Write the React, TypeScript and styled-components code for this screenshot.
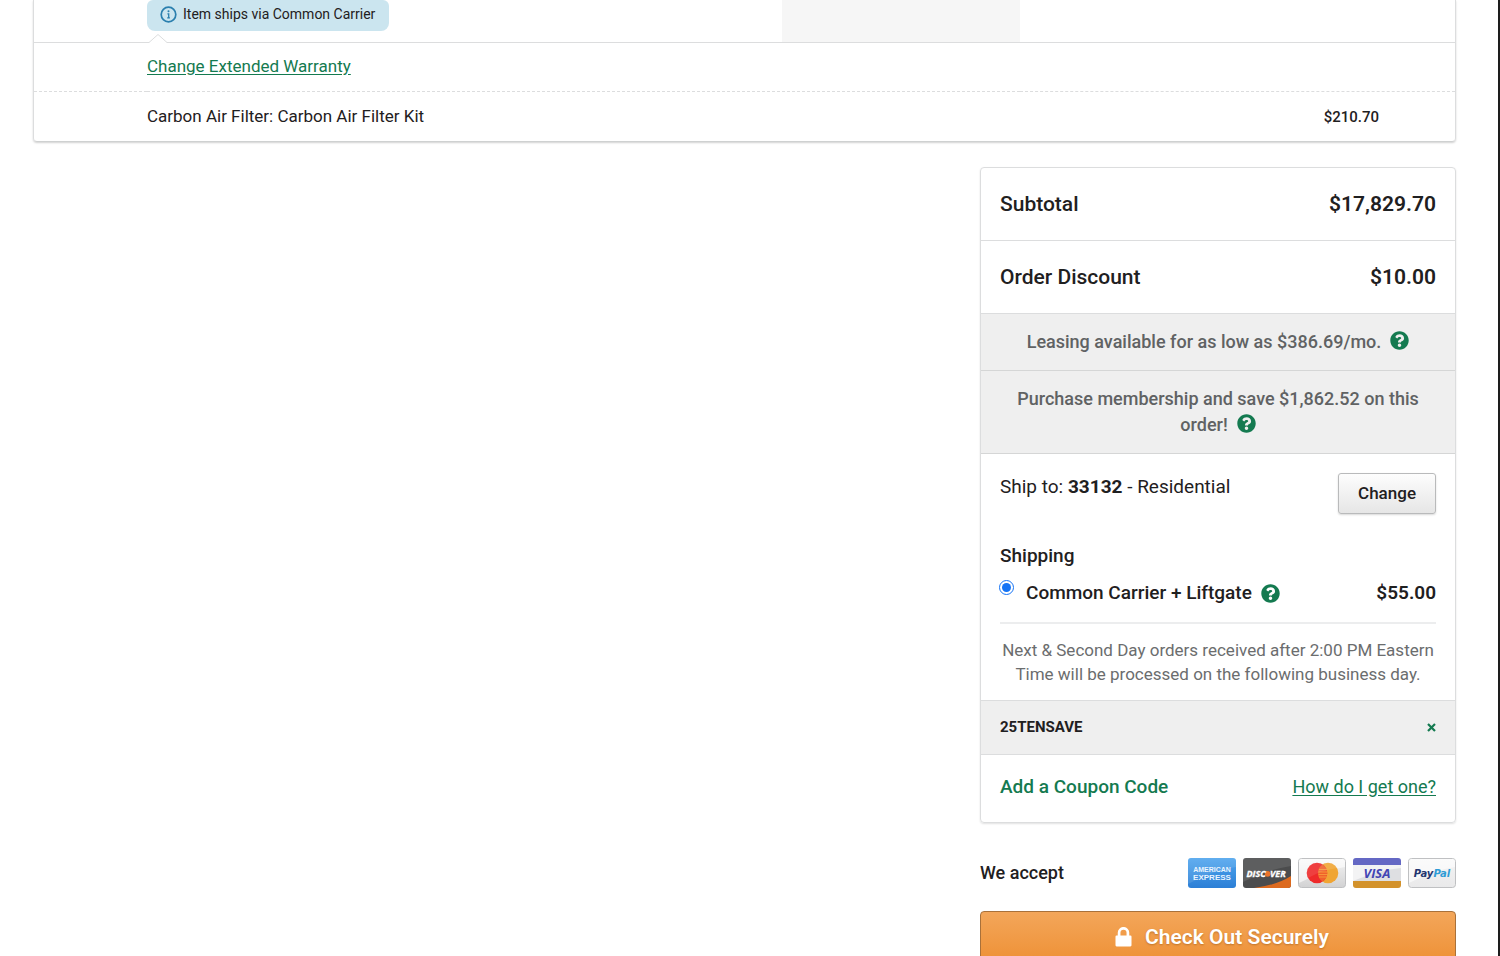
import React from "react";
import styled, { createGlobalStyle } from "styled-components";
import { FaQuestionCircle } from "react-icons/fa";

const GlobalStyle = createGlobalStyle`
  *, *::before, *::after { box-sizing: border-box; }
  body {
    margin: 0;
    background: #fff;
    color: #1f2021;
    font-family: Roboto, "Liberation Sans", sans-serif;
    font-size: 16px;
    line-height: 24px;
  }
  h2, p { margin: 0; }
  button, input { font: inherit; }
`;

const green = "#147a50";
const line = "#dcddde";

const Page = styled.main`
  height: 100vh;
  overflow: hidden;
  padding: 0 42px 0 33px;
  border-right: 2px solid #1d1d1d;
`;

const CartTable = styled.table`
  width: 100%;
  table-layout: fixed;
  border-spacing: 0;
  border: 1px solid ${line};
  border-top: 0;
  border-bottom-color: #cfd1d1;
  border-radius: 0 0 4px 4px;
  box-shadow: 0 1px 2px rgba(0, 0, 0, 0.18);
`;

const Col = styled.col<{ $width?: number }>`
  width: ${(p) => (p.$width ? `${p.$width}px` : "auto")};
`;

const Cell = styled.td<{ $shaded?: boolean }>`
  height: 42px;
  padding: 0;
  vertical-align: top;
  background: ${(p) => (p.$shaded ? "#f6f6f6" : "transparent")};
`;

const OptionCell = styled.td<{ $divider?: "solid" | "dashed"; $price?: boolean }>`
  position: relative;
  height: ${(p) => (p.$divider === "solid" ? 49 : 50)}px;
  padding: 0 ${(p) => (p.$price ? 76 : 0)}px ${(p) => (p.$price ? 0 : 2)}px 0;
  border-top: 1px ${(p) => p.$divider ?? "solid"} ${line};
  vertical-align: middle;
  text-align: ${(p) => (p.$price ? "right" : "left")};
  font-size: ${(p) => (p.$price ? 15 : 17)}px;
  font-weight: ${(p) => (p.$price ? 500 : 400)};
`;

const Notch = styled.svg`
  position: absolute;
  top: -9px;
  left: 2px;
  display: block;
`;

const ShipBadge = styled.div`
  display: inline-flex;
  align-items: center;
  gap: 6px;
  height: 31px;
  padding: 0 14px 3px 13px;
  border-radius: 6px 6px 8px 8px;
  background: #cbe5ef;
  font-size: 14px;
`;

const TextLink = styled.a<{ $size?: number }>`
  color: ${green};
  font-size: ${(p) => p.$size ?? 17}px;
  text-decoration: underline;
  text-underline-offset: 2px;
`;

const Aside = styled.aside`
  width: 476px;
  max-width: 100%;
  margin: 25px 0 0 auto;
`;

const Summary = styled.section`
  border: 1px solid ${line};
  border-radius: 4px;
  box-shadow: 0 1px 2px rgba(0, 0, 0, 0.12);
`;

const TotalRow = styled.div`
  display: flex;
  justify-content: space-between;
  align-items: center;
  height: 73px;
  padding: 0 19px;
  border-bottom: 1px solid ${line};
  font-size: 21px;
  font-weight: 500;
`;

const Amount = styled.span`
  font-weight: 600;
`;

const Promo = styled.p`
  padding: 15px 30px 15px;
  border-bottom: 1px solid #d5d6d6;
  background: #efefef;
  color: #606263;
  font-size: 18px;
  font-weight: 500;
  line-height: 26px;
  text-align: center;
`;

const HelpButton = styled.button`
  display: inline-flex;
  margin: 0 0 0 9px;
  padding: 0;
  border: 0;
  background: none;
  color: ${green};
  font-size: 19px;
  vertical-align: -2px;
  cursor: pointer;
`;

const ShipSection = styled.div`
  padding: 19px 19px 14px;
`;

const ShipTo = styled.div`
  display: flex;
  justify-content: space-between;
  align-items: flex-start;
  font-size: 19px;
  line-height: 28px;
`;

const ChangeButton = styled.button`
  height: 41px;
  padding: 0 19px 2px;
  border: 1px solid #b9babb;
  border-radius: 3px;
  background: linear-gradient(#fdfdfd, #e6e6e6);
  box-shadow: 0 1px 2px rgba(0, 0, 0, 0.15);
  color: #1f2021;
  font-size: 17px;
  font-weight: 500;
  cursor: pointer;
`;

const ShippingTitle = styled.h2`
  margin-top: 28px;
  font-size: 19px;
  font-weight: 500;
  line-height: 28px;
`;

const ShippingOption = styled.div`
  display: flex;
  align-items: center;
  padding: 9px 0 15px;
  border-bottom: 2px solid #ecedee;
  font-size: 19px;
  font-weight: 500;
  line-height: 28px;
`;

const Radio = styled.input`
  align-self: flex-start;
  width: 15px;
  height: 15px;
  margin: 1px 12px 0 -1px;
  accent-color: #1473f5;
`;

const OptionAmount = styled(Amount)`
  margin-left: auto;
`;

const ShipNote = styled.p`
  padding-top: 14px;
  color: #6b6d6e;
  font-size: 17px;
  text-align: center;
`;

const CouponRow = styled.div`
  display: flex;
  justify-content: space-between;
  align-items: center;
  height: 55px;
  padding: 0 19px 1px;
  border: solid ${line};
  border-width: 1px 0;
  background: #efefef;
  font-size: 15px;
  font-weight: 700;
`;

const PlainButton = styled.button`
  padding: 0;
  border: 0;
  background: none;
  color: ${green};
  font-size: 19px;
  font-weight: 500;
  cursor: pointer;
`;

const RemoveButton = styled(PlainButton)`
  display: flex;
`;

const CouponActions = styled.div`
  display: flex;
  justify-content: space-between;
  align-items: center;
  height: 67px;
  padding: 0 19px 4px;
`;

const AcceptRow = styled.div`
  display: flex;
  justify-content: space-between;
  align-items: center;
  margin: 35px 0 23px;
  font-size: 18px;
  font-weight: 500;
`;

const CardList = styled.div`
  display: flex;
  gap: 7px;
`;

const CheckoutButton = styled.button`
  display: flex;
  justify-content: center;
  align-items: center;
  gap: 13px;
  width: 100%;
  height: 52px;
  padding: 0 0 0 8px;
  border: 1px solid #a9713a;
  border-radius: 4px;
  background: linear-gradient(#f3a65a, #ee9136);
  color: #fff;
  font-size: 21px;
  font-weight: 600;
  text-shadow: 0 1px 2px rgba(120, 60, 0, 0.4);
  cursor: pointer;
`;

const InfoIcon = () => (
  <svg width="17" height="17" viewBox="0 0 17 17" aria-hidden="true">
    <circle cx="8.5" cy="8.5" r="7.3" fill="none" stroke="#2a7fae" strokeWidth="1.7" />
    <circle cx="8.5" cy="5.3" r="1" fill="#2a7fae" />
    <path d="M7.4 7.8h1.3v4M7.2 11.9h2.7" fill="none" stroke="#2a7fae" strokeWidth="1.3" />
  </svg>
);

const LockIcon = () => (
  <svg width="17" height="20" viewBox="0 0 17 20" aria-hidden="true">
    <path d="M4.1 9V5.7a4.4 4.4 0 0 1 8.8 0V9" fill="none" stroke="#fff" strokeWidth="2.7" />
    <rect x="0.5" y="8.6" width="16" height="10.8" rx="1.1" fill="#fff" />
  </svg>
);

const Help = ({ label }: { label: string }) => (
  <HelpButton type="button" aria-label={label}>
    <FaQuestionCircle />
  </HelpButton>
);

const Amex = () => (
  <svg width="48" height="30" viewBox="0 0 48 30" role="img" aria-label="American Express">
    <defs>
      <linearGradient id="amex" x1="0" y1="0" x2="0" y2="1">
        <stop offset="0" stopColor="#4fa5ee" />
        <stop offset="1" stopColor="#2c7fd6" />
      </linearGradient>
    </defs>
    <rect width="48" height="30" rx="3" fill="url(#amex)" />
    <path d="M3 0H45Q48 0 48 3V9Q26 12 0 26V3Q0 0 3 0Z" fill="#fff" opacity=".1" />
    <g fill="#e9f4ff" fontFamily="Liberation Sans, sans-serif" textAnchor="middle">
      <text x="24" y="14" fontSize="7" fontWeight="700">AMERICAN</text>
      <text x="24" y="22" fontSize="8" fontWeight="700">EXPRESS</text>
    </g>
  </svg>
);

const Discover = () => (
  <svg width="48" height="30" viewBox="0 0 48 30" role="img" aria-label="Discover">
    <clipPath id="discoverShape"><rect width="48" height="30" rx="3" /></clipPath>
    <g clipPath="url(#discoverShape)">
      <rect width="48" height="30" fill="#4b4c4d" />
      <path d="M0 0H48V8Q26 11 0 24Z" fill="#fff" opacity=".1" />
      <path d="M48 18Q34 27 11 30H48Z" fill="#dc6a1f" />
    </g>
    <circle cx="24.7" cy="15.8" r="2.9" fill="#e9732a" />
    <g fill="#fff" stroke="#fff" strokeWidth=".3" fontFamily="Open Sans, sans-serif" fontSize="9" fontWeight="700" fontStyle="italic">
      <text x="3.5" y="19">DISC</text>
      <text x="27" y="19">VER</text>
    </g>
  </svg>
);

const PaleCard = ({ id }: { id: string }) => (
  <>
    <defs>
      <linearGradient id={id} x1="0" y1="0" x2="0" y2="1">
        <stop offset="0" stopColor="#f4f4f4" />
        <stop offset="1" stopColor={id === "paypal" ? "#e9e9ea" : "#d2d2d3"} />
      </linearGradient>
    </defs>
    <rect x=".5" y=".5" width="47" height="29" rx="3" fill={`url(#${id})`} stroke="#bfc0c2" />
    <path d="M1 3Q1 1 3 1H45Q47 1 47 3V9Q26 12 1 25Z" fill="#fff" opacity=".6" />
  </>
);

const Mastercard = () => (
  <svg width="48" height="30" viewBox="0 0 48 30" role="img" aria-label="Mastercard">
    <PaleCard id="mastercard" />
    <circle cx="30" cy="15" r="10.3" fill="#f0a534" />
    <circle cx="19" cy="15" r="10.3" fill="#ee2a2a" />
    <path d="M24.5 6.4a10.3 10.3 0 0 1 0 17.2a10.3 10.3 0 0 1 0-17.2Z" fill="#f0622b" />
    <path d="M21 11.5h8M20.5 14h9M20.5 16.5h9M21 19h8" stroke="#f79a3c" strokeWidth=".9" />
    <path d="M9 12A10.3 10.3 0 0 1 24.5 6.4A10.3 10.3 0 0 1 39 10Q24 12 10 20Q8 16 9 12Z" fill="#fff" opacity=".1" />
  </svg>
);

const Visa = () => (
  <svg width="48" height="30" viewBox="0 0 48 30" role="img" aria-label="Visa">
    <clipPath id="visaShape"><rect width="48" height="30" rx="3" /></clipPath>
    <g clipPath="url(#visaShape)">
      <rect width="48" height="30" fill="#f3f3f4" />
      <path d="M48 10Q26 12 0 23V24H48Z" fill="#dedfe2" />
      <rect width="48" height="7" fill="#6468c4" />
      <rect y="23" width="48" height="7" fill="#d3922b" />
    </g>
    <text x="24" y="20" fill="#4345b4" fontFamily="Open Sans, sans-serif" fontSize="13" fontWeight="700" fontStyle="italic" textAnchor="middle">VISA</text>
  </svg>
);

const PayPal = () => (
  <svg width="48" height="30" viewBox="0 0 48 30" role="img" aria-label="PayPal">
    <PaleCard id="paypal" />
    <text x="24" y="19" fill="#23366f" fontFamily="DejaVu Sans, sans-serif" fontSize="10" fontWeight="700" fontStyle="italic" textAnchor="middle">
      Pay<tspan fill="#2e9cd6">Pal</tspan>
    </text>
  </svg>
);

export default function App() {
  return (
    <>
      <GlobalStyle />
      <Page>
        <CartTable>
          <colgroup>
            <Col $width={113} />
            <Col />
            <Col $width={238} />
            <Col $width={435} />
          </colgroup>
          <tbody>
            <tr>
              <Cell />
              <Cell>
                <ShipBadge>
                  <InfoIcon />
                  Item ships via Common Carrier
                </ShipBadge>
              </Cell>
              <Cell $shaded />
              <Cell />
            </tr>
            <tr>
              <OptionCell $divider="solid" />
              <OptionCell $divider="solid" colSpan={3}>
                <Notch width="18" height="10" viewBox="0 0 18 10" aria-hidden="true">
                  <path d="M0 8.5L9 0.5L18 8.5V10H0Z" fill="#fff" />
                  <path d="M0 8.5L9 0.5L18 8.5" fill="none" stroke={line} />
                </Notch>
                <TextLink href="#warranty">Change Extended Warranty</TextLink>
              </OptionCell>
            </tr>
            <tr>
              <OptionCell $divider="dashed" />
              <OptionCell $divider="dashed" colSpan={2}>
                Carbon Air Filter: Carbon Air Filter Kit
              </OptionCell>
              <OptionCell $divider="dashed" $price>$210.70</OptionCell>
            </tr>
          </tbody>
        </CartTable>

        <Aside>
          <Summary>
            <TotalRow>
              <span>Subtotal</span>
              <Amount>$17,829.70</Amount>
            </TotalRow>
            <TotalRow>
              <span>Order Discount</span>
              <Amount>$10.00</Amount>
            </TotalRow>
            <Promo>
              Leasing available for as low as $386.69/mo.
              <Help label="About leasing" />
            </Promo>
            <Promo>
              Purchase membership and save $1,862.52 on this order!
              <Help label="About membership" />
            </Promo>
            <ShipSection>
              <ShipTo>
                <span>
                  Ship to: <strong>33132</strong> - Residential
                </span>
                <ChangeButton type="button">Change</ChangeButton>
              </ShipTo>
              <ShippingTitle>Shipping</ShippingTitle>
              <ShippingOption>
                <Radio type="radio" id="liftgate" name="shipping" defaultChecked />
                <label htmlFor="liftgate">Common Carrier + Liftgate</label>
                <Help label="About liftgate delivery" />
                <OptionAmount>$55.00</OptionAmount>
              </ShippingOption>
              <ShipNote>
                Next &amp; Second Day orders received after 2:00 PM Eastern Time will be
                processed on the following business day.
              </ShipNote>
            </ShipSection>
            <CouponRow>
              25TENSAVE
              <RemoveButton type="button" aria-label="Remove coupon">
                <svg width="9" height="9" viewBox="0 0 9 9" aria-hidden="true">
                  <path d="M1 1L8 8M8 1L1 8" stroke={green} strokeWidth="2.2" />
                </svg>
              </RemoveButton>
            </CouponRow>
            <CouponActions>
              <PlainButton type="button">Add a Coupon Code</PlainButton>
              <TextLink href="#coupons" $size={18}>How do I get one?</TextLink>
            </CouponActions>
          </Summary>

          <AcceptRow>
            We accept
            <CardList>
              <Amex />
              <Discover />
              <Mastercard />
              <Visa />
              <PayPal />
            </CardList>
          </AcceptRow>
          <CheckoutButton type="button">
            <LockIcon />
            Check Out Securely
          </CheckoutButton>
        </Aside>
      </Page>
    </>
  );
}
